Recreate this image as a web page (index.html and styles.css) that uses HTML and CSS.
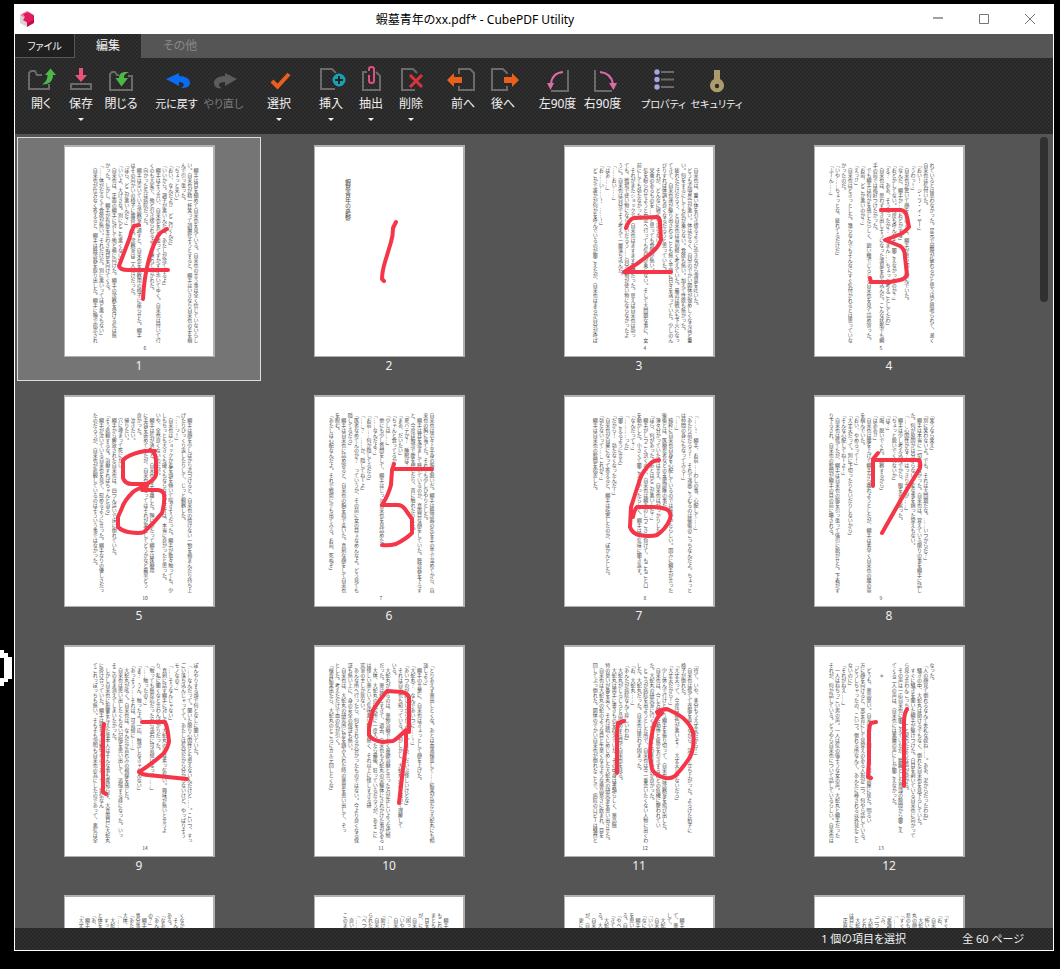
FILE: index.html
```html
<!DOCTYPE html>
<html lang="ja">
  <head>
    <meta charset="UTF-8" />
    <meta name="viewport" content="width=device-width, initial-scale=1.0" />
    <title>蝦墓青年のxx.pdf* - CubePDF Utility</title>
    <link rel="stylesheet" href="styles.css">
  </head>
  <body>
    <svg class="edge-mark" width="12" height="36" viewBox="0 0 12 36" aria-hidden="true">
      <path fill="#fff" d="M0 0H4V3H8V7H12V29H8V32H4V36H0V28H4V8H0z" />
    </svg>

    <div class="window">
      <header class="titlebar">
        <svg class="logo" width="16" height="16" viewBox="0 0 16 16" aria-hidden="true">
          <path fill="#d8d4d6" d="M1 4L8 8V16L1 12z" />
          <path fill="#f2789c" d="M1 4L8 0L15 4L8 8z" />
          <path fill="#c40d4c" d="M8 8L15 4V12L8 16z" />
          <path fill="#e31b5f" d="M4 3L9 1L14 4V9L9 12L4 9L6 6z" />
        </svg>
        <h1 class="title">蝦墓青年のxx.pdf* - CubePDF Utility</h1>
        <div class="window-buttons">
          <button aria-label="最小化"><svg width="12" height="12" viewBox="0 0 12 12"><path d="M1 5H11" stroke-width="2" stroke="#a0a0a0" /></svg></button>
          <button aria-label="最大化"><svg width="12" height="12" viewBox="0 0 12 12"><path d="M1.5 1.5H10.5V10.5H1.5z" /></svg></button>
          <button aria-label="閉じる"><svg width="12" height="12" viewBox="0 0 12 12"><path d="M1 1L11 11M11 1L1 11" /></svg></button>
        </div>
      </header>

      <nav class="tabs">
        <button class="tab tab-file">ファイル</button>
        <button class="tab tab-active">編集</button>
        <button class="tab tab-other">その他</button>
      </nav>

      <div class="ribbon">
        <div class="group">
          <button class="tool">
            <svg class="icon" viewBox="0 0 32 28"><path class="line" d="M17 9H12L10 5H6L4 7V23H24V18" /><path fill="#4cb848" d="M25.500 2.500L31 9H28C28 15 24 19 17 18.500C21 16 22.500 13 22.500 9H20z" /></svg>
            <span>開く</span>
          </button>
          <button class="tool">
            <svg class="icon" viewBox="0 0 32 28"><path fill="#e8537a" d="M14 2H18V9H22L16 16L10 9H14z" /><path class="line" d="M6 18H26V23H6z" /></svg>
            <span>保存</span>
            <i class="arrow"></i>
          </button>
          <button class="tool">
            <svg class="icon" viewBox="0 0 32 28"><path class="line" d="M14 9H12L10 6H7L5 8V24H27V10H23" /><path fill="#4cb848" d="M14 12C14 7 18 5 24 6.500C20 7.500 19 9 19 12H23L16.500 20.500L10.500 12z" /></svg>
            <span>閉じる</span>
          </button>
        </div>
        <div class="group">
          <button class="tool tool-mid">
            <svg class="icon" viewBox="0 0 32 28"><path fill="#0a6cf0" d="M5 13L18 7V10C25 10 29 13 29 17C29 20 26 22 20 22C24 20 24 16 18 16V20z" /></svg>
            <span>元に戻す</span>
          </button>
          <button class="tool tool-mid" disabled>
            <svg class="icon" viewBox="0 0 32 28"><path fill="#5c5c5c" d="M29 13L17 7V10C10 10 6 13 6 17C6 21 9 23 14 22C9 20 10 16 17 16V20z" /></svg>
            <span>やり直し</span>
          </button>
        </div>
        <div class="group">
          <button class="tool">
            <svg class="icon" viewBox="0 0 32 28"><path fill="none" stroke="#e8601c" stroke-width="4" d="M9 15L14.500 20.500L26 8" /></svg>
            <span>選択</span>
            <i class="arrow"></i>
          </button>
        </div>
        <div class="group">
          <button class="tool">
            <svg class="icon" viewBox="0 0 32 28"><path class="line" d="M20 23H6V3H17L21 7" /><circle cx="24" cy="14" r="6.500" fill="#17a2b3" /><path stroke="#222" stroke-width="2" d="M20 14H28M24 10V18" /></svg>
            <span>挿入</span>
            <i class="arrow"></i>
          </button>
          <button class="tool">
            <svg class="icon" viewBox="0 0 32 28"><path class="line" d="M12 6H8V24H25V10L21 6" /><path fill="none" stroke="#e0507c" stroke-width="2" d="M14 5V3Q14 1 16.500 1T19 3V15Q19 17 16.500 17T14 15V9" /></svg>
            <span>抽出</span>
            <i class="arrow"></i>
          </button>
          <button class="tool">
            <svg class="icon" viewBox="0 0 32 28"><path class="line" d="M20 24H7V3H18L22 7" /><path stroke="#d9343e" stroke-width="3" d="M15 9L27 21M27 9L15 21" /></svg>
            <span>削除</span>
            <i class="arrow"></i>
          </button>
        </div>
        <div class="group">
          <button class="tool">
            <svg class="icon" viewBox="0 0 32 28"><path class="line" d="M12 8V3H23L27 7V24H12V20" /><path fill="#e8601c" d="M0 14L7 7V11H15V17H7V21z" /></svg>
            <span>前へ</span>
          </button>
          <button class="tool">
            <svg class="icon" viewBox="0 0 32 28"><path class="line" d="M20 8V7L16 3H5V24H20V20" /><path fill="#e8601c" d="M32 14L25 7V11H17V17H25V21z" /></svg>
            <span>後へ</span>
          </button>
        </div>
        <div class="group">
          <button class="tool tool-turn">
            <svg class="icon" viewBox="0 0 32 28"><path class="line" d="M26 4V25H9" /><path fill="none" stroke="#dc6ba8" stroke-width="2" d="M21 6Q10 7 9 18" /><path fill="#dc6ba8" d="M5 17H12L8.500 24z" /></svg>
            <span>左90度</span>
          </button>
          <button class="tool tool-turn">
            <svg class="icon" viewBox="0 0 32 28"><path class="line" d="M8 4V25H25" /><path fill="none" stroke="#dc6ba8" stroke-width="2" d="M13 6Q24 7 26 18" /><path fill="#dc6ba8" d="M22 17H30L26.500 24z" /></svg>
            <span>右90度</span>
          </button>
        </div>
        <div class="group">
          <button class="tool tool-wide">
            <svg class="icon" viewBox="0 0 32 28"><g fill="#a5a5e0"><circle cx="9" cy="6" r="2.700" /><circle cx="9" cy="13.500" r="2.700" /><circle cx="9" cy="21" r="2.700" /></g><path class="line" d="M13 6H26M13 13.500H26M13 21H26" /></svg>
            <span>プロパティ</span>
          </button>
          <button class="tool tool-wide">
            <svg class="icon" viewBox="0 0 32 28"><path fill="#ab9c6c" d="M13 4H19V13A7 7 0 1 1 13 13z" /><circle cx="16" cy="20" r="2.200" fill="#2b2b2b" /></svg>
            <span>セキュリティ</span>
          </button>
        </div>
      </div>

      <main class="viewer">
        <ul class="pages">
          <li class="item selected">
            <div class="page">
              <div class="text">
                <p>　綱手は目を細めて自来也を見ている。自来也の言う事は全く信じていないらし</p>
                <p>い。自来也が精一杯笑って誤魔化そうとすると、綱手はいきなり自来也の手を掴</p>
                <p>んで引っ張った。</p>
                <p>「ちょっと来い」</p>
                <p>「おい、なんだよ⁉　どこ行くんだ」</p>
                <p>「いいから。調子が悪いんだろ、あたしが診てやるよ」</p>
                <p>　綱手はそう言い、自来也を引っ張ってずかずか歩いてゆく。自来也は付いて行</p>
                <p>くのも大変で、殆ど引き摺られるように連れて行かれた。</p>
                <p>　向かった先は病院だった。</p>
                <p>　綱手は空いている診察室へ通すと、自来也を診察用の椅子に座らせた。綱手</p>
                <p>はその向かいの椅子に腰掛ける。診察室は二人だけだった。</p>
                <p>「ほら、どこが悪いんだ？」</p>
                <p>「いいよ、大げさな。別にどこも悪くない」</p>
                <p>　自来也は、正面の綱手に対して殆ど横に向けた。綱手の診察を受ける気は無</p>
                <p>かった。しかし、綱手が有無を言わさぬ目を向けてくる。</p>
                <p>「……体がだるくて食欲が無い。それだけだ。別に悪いってほど悪くもない」</p>
                <p>　自来也が仕方なく答えると、綱手は聴診器を取り出した。綱手に顎で指示され</p>
              </div>
              <span class="folio">6</span>
              <svg class="ink" viewBox="0 0 151 212"><path d="M75 80L70 81Q67 86 66 92L55 121Q56 125 64 125L104 125M103 84Q96 87 94 91Q88 102 84 118Q80 134 79 154" /></svg>
            </div>
            <span class="number">1</span>
          </li>
          <li class="item">
            <div class="page">
              <p class="cover">蝦墓青年の憂鬱</p>
              <svg class="ink" viewBox="0 0 151 212"><path d="M82 77L79 83Q79 91 77 97L71 117Q68 127 68 134L70 136" /></svg>
            </div>
            <span class="number">2</span>
          </li>
          <li class="item">
            <div class="page">
              <div class="text">
                <p>　自来也は、重い体を引き摺るように歩きながら溜息を吐いた。</p>
                <p>　どうも近頃具合が悪い。体はだるく、自分のでかい図体が恨めしくなるほど重</p>
                <p>い。何をするにしても気が乗らない。食欲も無い。加えて性欲も無かった。</p>
                <p>　疲れただけだろう、と自来也は当初軽く考えていた。最近は戦火も下火になっ</p>
                <p>てきて、自来也達が駆り出されることも無く平穏に日々を送っていた。少しのん</p>
                <p>びりすれば体調も良くなるだろうと思っていた。</p>
                <p>　それが、どんなに寝ても治らない。</p>
                <p>　栄養のあるものを……と思っても食欲が無い。</p>
                <p>　気を紛らわせようと女湯へ行っても気分が乗らない。そして大問題な事に、女</p>
                <p>前にしても勃たなかった。</p>
                <p>　それがまたショックで、自来也はますます憂鬱だった。思えば自来也は勃っ</p>
                <p>ても、戦場で使い物にならないだろう……自分の物が使い物にならなかったよ</p>
                <p>うに。自来也は自分でそう考えて一層落ち込んだ。</p>
                <p>「……おい……」</p>
                <p>「はあ……」</p>
                <p>「お……い……！　……！」</p>
                <p>　どこかで誰かが何かを呼んでいるのが聞こえたが、自来也はまるか自分が呼ば</p>
              </div>
              <span class="folio">4</span>
              <svg class="ink" viewBox="0 0 151 212"><path d="M62 83Q65 74 70 73L93 72Q96 72 96 78L97 95Q94 103 86 109Q74 119 60 127L107 127" /></svg>
            </div>
            <span class="number">3</span>
          </li>
          <li class="item">
            <div class="page even">
              <div class="text">
                <p>れているとは思わなかった。足元で鼓膜が破れるかと思うほど怒鳴られて、漸く</p>
                <p>自来也は気付いた。</p>
                <p>「おい！　ジ・ラ・イ・ヤ！」</p>
                <p>「うわっ！」</p>
                <p>　自来也が驚いて顔を上げると、綱手が思い切り睨んでいた。</p>
                <p>「なんだ、綱手か……おどかすな」</p>
                <p>「おどかしてない。何度も呼んだぞ。聞こえなかったのか？」</p>
                <p>「え？　ああ、そうだったか？　すまん……ちょっと考えごとしてたわ」</p>
                <p>　自来也は、思わず吐き出しそうになった溜息を呑み込んだ。こんな状態でも綱</p>
                <p>手の前では格好つけたかった。</p>
                <p>　でも綱手は何かを感じたらしく、鋭い瞳でじろじろ自来也を見て詰め寄った。</p>
                <p>「お前、どこか悪いのか？」</p>
                <p>「えっ⁉」</p>
                <p>　自来也はどきっとした。幾らなんでもそんなにすぐ気付かれるとは思っていな</p>
                <p>かったのだ。</p>
                <p>「いや……ちょっとな、疲れてるだけだ」</p>
                <p>「ふーん……」</p>
              </div>
              <span class="folio">5</span>
              <svg class="ink" viewBox="0 0 151 212"><path d="M67 65L87 65Q92 66 93 72L95 82Q92 86 87 89L71 95L86 101Q91 104 91 112L93 130Q91 134 86 135L76 137H57L56 133" /></svg>
            </div>
            <span class="number">4</span>
          </li>

          <li class="item">
            <div class="page">
              <div class="text">
                <p></p>
                <p>　綱手は顔を少しばかり近づけると、自来也の情けない一物を摘まんだり持ち上</p>
                <p>げたりひっくり返したりして、じっと観察した。</p>
                <p>「……っ！」</p>
                <p>　自来也はショックか羞を頭を傾いて喘ぎそうだった。綱手が散々触っても、少</p>
                <p>しもちっとも大きくも硬くもならない。だけは、本当に良かったと思った。</p>
                <p>いや、全然良くないのだが。</p>
                <p>　綱手は気が済むと、自来也の手を離した。顎にあたって綱手は医療用</p>
                <p>に手袋を嵌めていたが、自来也にとってはそれが果たしてどうかなど最早どう</p>
                <p>良かった。</p>
                <p>　泣きたい。</p>
                <p>　帰りたい。</p>
                <p>　穴に埋まって死にたい。</p>
                <p>　綱手から解放された自来也は、四つん這いで床に倒れていた。</p>
                <p>「そう悲観するな。治療すればちゃんと治る」</p>
                <p>　綱手が泣いている自来也を見て、慰めるように言った。綱手なりの優しさだっ</p>
                <p>たのだろうが、自来也が悲観しているのはそういう事ではなかった。</p>
              </div>
              <span class="folio">10</span>
              <svg class="ink" viewBox="0 0 151 212"><path d="M91 56Q84 55 76 57Q64 60 59 65V83Q61 89 68 89H83Q91 84 92 80V66Q92 57 86 55M83 91Q74 93 69 97Q60 106 58 113L54 122V132Q58 136 64 137Q76 139 80 137Q90 128 98 118Q101 108 100 99Q98 95 93 95H78" /></svg>
            </div>
            <span class="number">5</span>
          </li>
          <li class="item">
            <div class="page even">
              <div class="text">
                <p>自来也は渋々上半身の服を脱いだ。綱手は聴診器の先を手の平で温めてから、自</p>
                <p>来也の胸に当てた。それでも少しひやりとした。</p>
                <p>　綱手は耳を澄まして聴いているのか、真面目な顔をしていた。聴診器を下ろす</p>
                <p>と、今度は触診で腹を押したり、首に触れたりした。</p>
                <p>「夏バテか？　睡眠は？」</p>
                <p>「まあ、だいたい」</p>
                <p>「ちゃんと食ってるか」</p>
                <p>「少しは……」</p>
                <p>　他にも少し質問をして、綱手はじっと自来也を見詰めた。</p>
                <p>「……なんだよ？」</p>
                <p>「お前……何か隠してるだろ」</p>
                <p>「……？　……か、隠してねーよ」</p>
                <p>「医者なめてんのか？　っていうか、その前に女の目ぇなめんなよ。どう見ても</p>
                <p>隠してるだろ」</p>
                <p>　綱手は自来也に詰め寄ると、自来也の胸を指で突いた。真剣な顔をして自来也</p>
                <p>を睨む。</p>
                <p>「あたしは心配なんだよ。それで戦場にでも出てみろ。お前、死ぬぞ」</p>
              </div>
              <span class="folio">7</span>
              <svg class="ink" viewBox="0 0 151 212"><path d="M80 69L78 75L77 90Q74 101 68 110H84Q88 110 91 114L98 124V138Q92 144 82 149Q75 151 68 150M79 74H118" /></svg>
            </div>
            <span class="number">6</span>
          </li>
          <li class="item">
            <div class="page">
              <div class="text">
                <p>「……！　綱手、お前……わしの事、心配して……」</p>
                <p>「あたり前だろう！　それで迷惑こうむるのは後衛のこっちなんだよ。ちょっと</p>
                <p>は仲間の身にもなってみろ！」</p>
                <p>「……」</p>
                <p>　純粋に自来也自身を心配しているのでは無かったらしい。因みに綱手が言った</p>
                <p>後衛とは、医療忍者などの支援部隊の事だ。</p>
                <p>　薄々分かっていたとは言え、自来也はがっかりした。</p>
                <p>「ほら、何があった。あとはどこが悪いんだ？」</p>
                <p>　綱手がしつこく訊くので、自来也は綱手のしつこさに負けて、もごもごと口</p>
                <p>を動かした。小さくて聞こえなかったらしく、綱手は不気味に聞き返す。</p>
                <p>「なんだって？」</p>
                <p>「…………った」</p>
                <p>「聞こえるように言え」</p>
                <p>「だから！　勃たなくなったんだ！」</p>
                <p>　自来也が自棄になって答えると、綱手は吃驚したのか、ぽかんとした。</p>
                <p>「勃たないって……これが？」</p>
                <p>　綱手は自来也の股間を指差した。</p>
              </div>
              <span class="folio">8</span>
              <svg class="ink" viewBox="0 0 151 212"><path d="M95 65Q88 66 86 69Q79 76 76 84L67 112L66 132Q68 138 75 140Q86 142 93 140Q102 134 106 124Q108 117 102 114Q96 112 89 112H73Q70 115 69 122" /></svg>
            </div>
            <span class="number">7</span>
          </li>
          <li class="item">
            <div class="page even">
              <div class="text">
                <p>「笑うなら笑え」</p>
                <p>「別に笑わないよ。でも、それは大問題だな。……いつからだ？」</p>
                <p>　綱手は本当に一切笑わなかった。自来也は、覚えている限りの事を綱手に話し</p>
                <p>た。何が原因かは分からない。変な事を煩った覚えもない。</p>
                <p>「……心因性かな？　はっきり言うが……」</p>
                <p>　綱手は少し考え込んでから、眼を光に戻った。</p>
                <p>「ちょっと脱いでくれないか」</p>
                <p>「は？」</p>
                <p>「服、脱いでくれ。診察するから」</p>
                <p>「はああ⁉」</p>
                <p>　自来也は腰を上げて綱手から離れようとしたが、綱手は素早く自来也の腰の帯</p>
                <p>を掴んでいた。</p>
                <p>「おい、やめろって！」</p>
                <p>「大丈夫だって。別に下切ったりもいだりしないから」</p>
                <p>「そんな心配してねーよ！」</p>
                <p>　自来也は慌てたが、綱手は自来也の服を引っ張って強引に脱がせた。下着がず</p>
                <p>り下ろされ、自来也の股間が綱手の目の前に曝される。</p>
              </div>
              <span class="folio">9</span>
              <svg class="ink" viewBox="0 0 151 212"><path d="M64 58L59 64V91M59 65H105Q107 67 106 73L89 101L68 138" /></svg>
            </div>
            <span class="number">8</span>
          </li>

          <li class="item">
            <div class="page">
              <div class="text">
                <p>ぽんやりする頭で何となしに聞いていた。</p>
                <p>「……なんだって。聞いた限り心因性とも思えないんだけど……。こいつ、すっ</p>
                <p>ごい落ち込んじゃってて。あたしは気分だから分からないけど、やっぱりそう</p>
                <p>モノなの？」</p>
                <p>「……そうなんじゃない」</p>
                <p>　真剣に話す綱手に対して、大蛇丸の声は素っ気無い。興味が無いと言うよ</p>
                <p>り、私に聞くなと言わんばかりだった。</p>
                <p>「触っても無反応だったから流石に可哀想になって……」</p>
                <p>「……触ったの？」</p>
                <p>「ま？　うん、触ったよ。一応、触診しなきゃなんない」</p>
                <p>「あっそう……それは、可哀想に……」</p>
                <p>　大蛇丸が呟く。自来也は、なんだか哀れみの視線を感じた。</p>
                <p>　自来也は思い出したくもない記憶を思い出して、追憶する様になった。いっ</p>
                <p>そこのまま消えてしまいたかった。</p>
                <p>　しかし自来也に影響を与えた張本人はそんな事も露知らず、大真面目に大蛇丸</p>
                <p>に掛け合っていた。綱手は彼なりに親切なのであって、悪気なん</p>
                <p>てこれっぽっちも無い。そもそも説明も自来也の為にしたのであって、悪気は全</p>
              </div>
              <span class="folio">14</span>
              <svg class="ink" viewBox="0 0 151 212"><path d="M40 79L39 88V147L42 149M78 77H101Q104 83 105 97Q103 105 99 109Q89 118 75 127Q76 129 84 130L123 134" /></svg>
            </div>
            <span class="number">9</span>
          </li>
          <li class="item">
            <div class="page even">
              <div class="text">
                <p>「とりあえず薬出しとくな。あとは血液検査して……結果が出たら大蛇丸にも相</p>
                <p>談しよう」</p>
                <p>　綱手の言葉に、自来也はぎょっとして顔を上げた。</p>
                <p>「大蛇丸？　なんであいつに……！」</p>
                <p>「あいつのが詳しいからだよ……。まあ、だいぶ怪しいけどな」</p>
                <p>　それは自来也も知っている。だがしかし、大蛇丸の話を掘って理解して</p>
                <p>いる。</p>
                <p>　大蛇丸がやるのは、薬物治療でなく基礎治療と言った方が正しいような代物</p>
                <p>だった。薬は怪しすぎて、過去、自来也も大蛇丸の実験体にされかけた事がある</p>
                <p>　大体、大蛇丸の研究所に一度入ったら最後、狂っているだろうが、あそこに</p>
                <p>は怪しい薬という気味悪い物しか無く、それ以上に怪しすぎる研</p>
                <p>究室の主しか居ない。</p>
                <p>　あんな所へ行ったら、何をされるか分かったものではない。今より良くなる保</p>
                <p>証も無い上に、身の安全の保証も無い。</p>
                <p>　自来也は、大蛇丸の研究所に足を踏み入れた時の薬臭を思い出して、ぞっ</p>
                <p>とした。考えただけで血の気が引く。</p>
                <p>「検査結果出たら、大蛇丸のところにカルテ回しとくな」</p>
              </div>
              <span class="folio">11</span>
              <svg class="ink" viewBox="0 0 151 212"><path d="M95 87V52Q93 48 88 47L73 46Q66 54 59 65L55 83V90Q57 95 69 97L79 96Q83 94 92 85L92 100L89 124L85 158" /></svg>
            </div>
            <span class="number">10</span>
          </li>
          <li class="item">
            <div class="page">
              <div class="text">
                <p>「待て、いや、多分もう大丈夫だから！」</p>
                <p>　自来也は慌てて衣服を直しながら、急いで立ち上がった。よろけた拍子に</p>
                <p>椅子が倒れた。</p>
                <p>「大丈夫って、今度は顔色が悪いぞ？　大丈夫じゃないだろ」</p>
                <p>「大丈夫だから！」</p>
                <p>　少し休んで行けという綱手を振り切って、自来也は診察室を飛び出した。</p>
                <p>　自来也は、今し方覚えた動悸と疲労を引きずるほどの危機に襲われてい</p>
                <p>た。大蛇丸の研究室に行くよりは、このままの方が良かった。</p>
                <p>　ところが病院を出ようとした所で、自来也は今一番会いたくない人物に出くわ</p>
                <p>した。大蛇丸だった。自来也は思わず固まった。</p>
                <p>「お、大蛇丸……」</p>
                <p>「あんたが病院なんて珍しいわね」</p>
                <p>　大蛇丸がじろじろと品定めする目で自来也を見る。</p>
                <p>　大蛇丸は両手に書きものを抱えていた。その中身は書類らしく、薬品独</p>
                <p>特の臭いが鼻を突く。それは暗くじめじめした大蛇丸の研究室を思い出させた。</p>
                <p>　自来也は大蛇丸の蛇のような目と生臭くなるような薬品臭さに飲まれ、目を</p>
                <p>回してぶっ倒れた。図体のでかい自来也が倒れたことで、病院のロビーは騒然と</p>
              </div>
              <span class="folio">12</span>
              <svg class="ink" viewBox="0 0 151 212"><path d="M60 76L54 78Q53 85 53 91V128M93 67Q98 64 103 64Q114 69 119 73Q126 79 129 87Q131 102 126 112Q119 123 111 131Q105 135 98 132Q90 129 88 124L86 112Q86 97 89 84Q92 72 98 68L94 69" /></svg>
            </div>
            <span class="number">11</span>
          </li>
          <li class="item">
            <div class="page even">
              <div class="text">
                <p>なった。</p>
                <p>「人の顔見て倒れるなんて失礼な奴ね……。ああ、泥からだったわね」</p>
                <p>　騒ぎの中、大蛇丸は助けるでもなく、倒れた自来也を見下ろしていた。</p>
                <p>　すぐに騒ぎを聞いた綱手が駆けつけた。白目を剥いている自来也に向かって</p>
                <p>ら見ろ言わんこっちゃ……」と呆れたような声が掛かる。</p>
                <p>　その声は一応自来也に聞こえていたが、朦朧とした意識の隙間から聞こえ</p>
                <p>てくる二人の声は、自来也には悪魔の声にしか聞こえなかった。</p>
                <p></p>
                <p>　　＊</p>
                <p></p>
                <p>　どうも、薬品臭い。自来也が目を開けると、暗い部屋に居た。明るい</p>
                <p>方に顔を向けると、窓を背にして見覚えのある人影が二つ、何やら話している。</p>
                <p>「どうしちゃったの、こいつ。倒れる所なんて、あんたに棒される以外見たこと</p>
                <p>ないのに」</p>
                <p>「それがねえ……」</p>
                <p>　一人はねちっこい男の声。一人は気の強そうな女の声。大蛇丸と綱手だった</p>
                <p>それが、何か話している。どうやら自来也について話しているらしい。自来也は</p>
              </div>
              <span class="folio">13</span>
              <svg class="ink" viewBox="0 0 151 212"><path d="M62 77L57 78Q55 81 55 86V116L54 132L57 133M93 64Q90 69 90 77V141" /></svg>
            </div>
            <span class="number">12</span>
          </li>

          <li class="item">
            <div class="page even">
              <div class="text">
                <p>くなか</p>
                <p>　そん</p>
                <p>ある。</p>
                <p>「なあ</p>
                <p>「あん</p>
                <p>の？」</p>
                <p>　綱手</p>
                <p>事分事</p>
                <p>「あた</p>
                <p>大体、</p>
                <p>「……</p>
                <p>　大蛇</p>
                <p>　すっ</p>
                <p>と体を</p>
                <p>「あ、</p>
                <p>　綱手</p>
                <p>「大丈</p>
              </div>
            </div>
            <span class="number">13</span>
          </li>
          <li class="item">
            <div class="page">
              <div class="text">
                <p>　綱手</p>
                <p>もこれ</p>
                <p>まとも</p>
                <p>　目を</p>
                <p>が、に</p>
                <p>　自来</p>
                <p>「困っ</p>
                <p>「いや</p>
                <p>　自来</p>
                <p>「……</p>
                <p>「助け</p>
                <p>　自来</p>
                <p>られた</p>
                <p>「べつ</p>
                <p>「……</p>
                <p>　良い</p>
                <p>このま</p>
              </div>
            </div>
            <span class="number">14</span>
          </li>
          <li class="item">
            <div class="page even">
              <div class="text">
                <p>　綱手</p>
                <p>て、薬</p>
                <p>して、</p>
                <p>　大蛇</p>
                <p>　自来</p>
                <p>「いい</p>
                <p>「なに</p>
                <p>　綱手</p>
                <p>を思い</p>
                <p>る。自</p>
                <p>「やべ</p>
                <p>「きて</p>
                <p>　大蛇</p>
                <p>る。大</p>
                <p>　自来</p>
                <p>が、自</p>
                <p>　更に</p>
              </div>
            </div>
            <span class="number">15</span>
          </li>
          <li class="item">
            <div class="page">
              <div class="text">
                <p>「すぐ</p>
                <p>「お、</p>
                <p>　自来</p>
                <p>「怖い</p>
                <p>　大蛇</p>
                <p>丸の顔</p>
                <p>忍のも</p>
                <p>「すぐ</p>
                <p>「……</p>
                <p>「悪趣</p>
                <p>「み、</p>
                <p>「二つ</p>
                <p>　大蛇</p>
                <p>　どれ</p>
                <p>　大蛇</p>
                <p>は目に</p>
                <p>　正直</p>
              </div>
            </div>
            <span class="number">16</span>
          </li>
        </ul>
        <div class="scrollbar"><div class="thumb"></div></div>
      </main>

      <footer class="status">
        <span>1 個の項目を選択</span>
        <span>全 60 ページ</span>
      </footer>
    </div>
  </body>
</html>
```
FILE: styles.css
```css
* {
  box-sizing: border-box;
}

body {
  margin: 0;
  padding: 4px 6px 18px 14px;
  height: 100vh;
  display: flex;
  background: #000;
  color: #f0f0f0;
  font-family: 'Noto Sans', 'Noto Sans CJK JP', sans-serif;
  font-size: 12px;
  font-feature-settings: 'palt';
  overflow: hidden;
}

button {
  margin: 0;
  padding: 0;
  border: 0;
  background: none;
  color: inherit;
  font: inherit;
  font-feature-settings: inherit;
}

.edge-mark {
  position: absolute;
  left: 0;
  top: 650px;
}

.window {
  flex: 1;
  min-width: 0;
  display: flex;
  flex-direction: column;
  border: 1px solid #fff;
  border-top: 0;
  background: #555;
}

/* title bar */
.titlebar {
  flex: none;
  height: 30px;
  display: flex;
  align-items: center;
  padding-left: 4px;
  background: #fff;
  color: #000;
}

.title {
  flex: 1;
  margin: 0;
  font-size: 12px;
  font-weight: normal;
  text-align: center;
}

.window-buttons {
  display: flex;
}

.window-buttons button {
  width: 46px;
  height: 30px;
  display: flex;
  align-items: center;
  justify-content: center;
}

.window-buttons svg {
  fill: none;
  stroke: #777;
}

/* tabs and ribbon */
.tabs {
  flex: none;
  height: 24px;
  display: flex;
}

.tab {
  width: 66px;
  line-height: 24px;
}

.tab-file {
  width: 60px;
  background: #202020;
  border: solid #555;
  border-width: 0 1px 1px 0;
  font-size: 10px;
}

.tab-other {
  width: 78px;
  color: #888;
}

.ribbon,
.tab-active,
.status {
  background-color: #303030;
  background-image: radial-gradient(#262626 1px, transparent 1px), radial-gradient(#262626 1px, transparent 1px);
  background-size: 4px 4px;
  background-position: 0 0, 2px 2px;
}

.ribbon {
  flex: none;
  height: 76px;
  display: flex;
  gap: 12px;
  padding: 8px 6px 0;
}

.group {
  display: flex;
}

.tool {
  width: 40px;
  display: flex;
  flex-direction: column;
  align-items: center;
  white-space: nowrap;
  line-height: 20px;
}

.tool-mid {
  width: 47px;
  font-size: 11px;
}

.tool-turn {
  width: 45px;
}

.tool-wide {
  width: 53px;
  font-size: 10px;
}

.tool:disabled {
  color: #7a7a7a;
}

.icon {
  flex: none;
  width: 32px;
  height: 28px;
}

.line {
  fill: none;
  stroke: #6a6a6a;
  stroke-width: 2;
}

.arrow {
  margin-top: 4px;
  border: solid transparent;
  border-width: 3px 3px 0;
  border-top-color: #f0f0f0;
}

/* page thumbnails */
.viewer {
  flex: 1;
  min-height: 0;
  display: flex;
}

.pages {
  flex: 1;
  margin: 0;
  padding: 3px 0 0 2px;
  display: grid;
  grid-template-columns: repeat(auto-fill, 244px);
  grid-auto-rows: 244px;
  gap: 6px;
  list-style: none;
  overflow: hidden;
}

.item {
  display: flex;
  flex-direction: column;
  align-items: center;
  padding-top: 7px;
  border: 1px solid transparent;
}

.selected {
  background: #757575;
  border-color: #ddd;
}

.page {
  position: relative;
  flex: none;
  width: 151px;
  height: 212px;
  display: flex;
  flex-direction: column;
  align-items: flex-start;
  padding: 16px 0 0 27px;
  border: solid #b0b0b0;
  border-width: 2px 2px 1px 1px;
  background: #fff;
  color: #4a4a4a;
  font-family: 'Noto Sans CJK JP', sans-serif;
  font-size: 5px;
  font-feature-settings: normal;
}

.even {
  padding-left: 13px;
}

.text {
  width: 107px;
  height: 182px;
  display: flex;
  flex-direction: row-reverse;
}

.text p {
  flex: 1;
  min-width: 0;
  margin: 0;
  writing-mode: vertical-rl;
  line-height: 6px;
  white-space: nowrap;
}

.folio {
  width: 107px;
  line-height: 6px;
  text-align: center;
}

.cover {
  margin: 16px 0 0 2px;
  writing-mode: vertical-rl;
  font-size: 6px;
  line-height: 8px;
}

.ink {
  position: absolute;
  left: -1px;
  top: -2px;
  width: 151px;
  height: 212px;
  fill: none;
  stroke: #f43648;
  stroke-width: 4;
  stroke-linecap: round;
  stroke-linejoin: round;
}

.number {
  line-height: 18px;
}

.scrollbar {
  flex: none;
  padding: 3px 5px;
}

.thumb {
  width: 8px;
  height: 21%;
  border-radius: 4px;
  background: #303030;
}

.status {
  flex: none;
  height: 22px;
  display: flex;
  justify-content: flex-end;
  gap: 56px;
  padding-right: 29px;
  font-size: 11px;
  line-height: 22px;
}
```
